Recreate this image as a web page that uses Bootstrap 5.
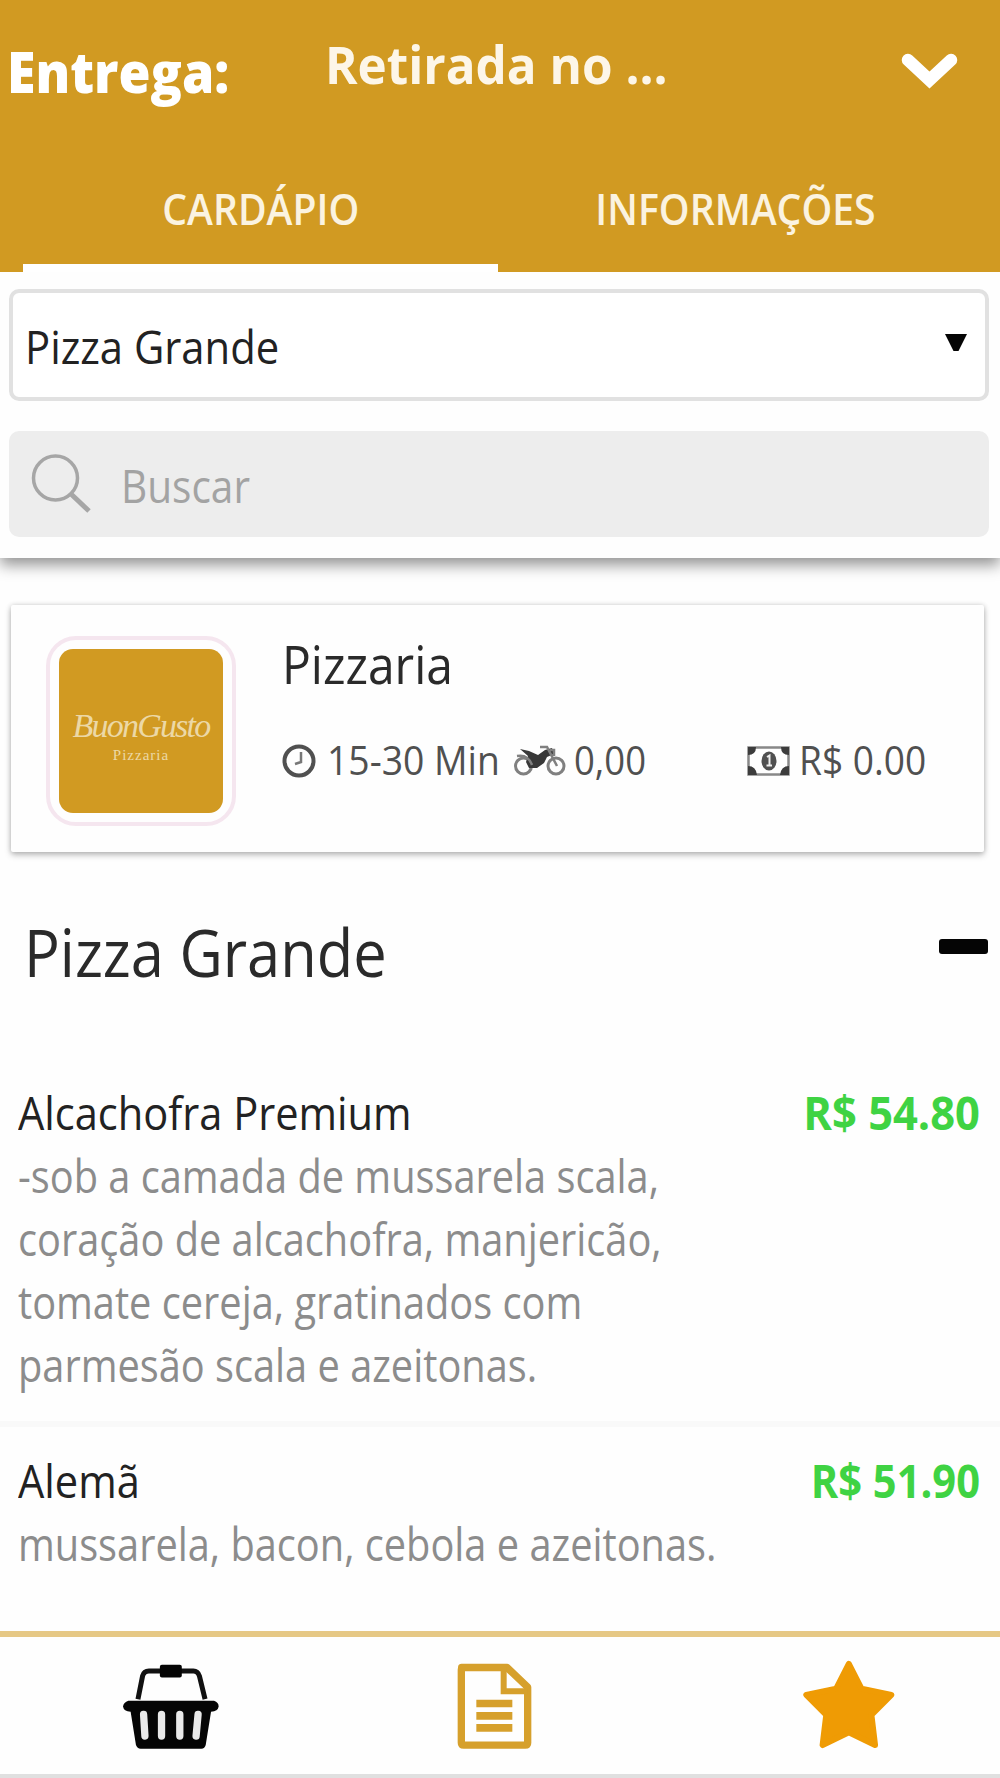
<!DOCTYPE html>
<html lang="pt-BR">
<head>
<meta charset="utf-8">
<meta name="viewport" content="width=device-width, initial-scale=1">
<title>Pizzaria - Cardápio</title>
<link href="https://cdn.jsdelivr.net/npm/bootstrap@5.3.0/dist/css/bootstrap.min.css" rel="stylesheet">
<style>
:root{--gold:#d19a22}
body{font-family:"Open Sans","Noto Sans",sans-serif;background:#fefefe;color:#222;width:1000px;height:1778px;overflow:hidden}
/* slightly condensed text */
.cond{display:inline-block;white-space:nowrap;transform-origin:0 50%;transform:scaleX(var(--sx,.91))}
.cond-end{transform-origin:100% 50%}
.topbar{background:var(--gold);height:272px;color:#fff}
.ship-row{height:144px}
.ship-label{font-size:57px;font-weight:800;line-height:64px;width:325px;padding:39px 0 0 7px;--sx:.91}
.ship-value{font-size:52px;font-weight:700;line-height:64px;padding-top:32px;color:#fdf6e8;--sx:.95}
.chev{width:60px;height:40px;margin:51px 40px 0 auto}
.tab-row{height:128px;padding:0 23px}
.tab-row .nav-link{color:#fbf3e0;font-size:44px;font-weight:600;line-height:60px;padding:34px 0 26px;border:0;border-bottom:8px solid transparent;border-radius:0;width:475px;height:128px;text-align:center;background:none}
.tab-row .nav-link.active{border-bottom-color:#fff}
.tab-row .cond{transform-origin:50% 50%;--sx:.89}
.filters{background:#fefefe;height:286px;padding:17px 11px 0 9px;box-shadow:0 7px 14px rgba(0,0,0,.42);clip-path:inset(0 0 -40px 0)}
.cat-select{height:112px;border:4px solid #e1e1e1;border-radius:10px;padding:0 17px 0 12px;font-size:46px;line-height:104px;background:#fff;--sx:.908;color:#222}
.cat-select .cond{padding-top:2px}
.search-box{height:106px;margin-top:30px;border-radius:10px;background:#ededed;color:#a3a3a3;font-size:46px;padding-left:22px;--sx:.882}
.search-box svg{width:60px;height:60px;margin-right:30px}
.search-box .cond{padding-top:2px}
.shop{margin:47px 16px 0 11px;height:247px;border-radius:2px;background:#fefefe;box-shadow:0 3px 6px rgba(0,0,0,.25),0 0 5px rgba(0,0,0,.15);padding:31px 0 0 35px}
.logo-frame{width:190px;height:190px;border:4px solid #f5e6ef;border-radius:30px;padding:9px}
.logo-tile{height:164px;border-radius:14px;background:var(--gold);color:#ecd8a6;font-family:"Liberation Serif",serif;line-height:1;padding-top:57px}
.logo-name{font-size:34px;font-style:italic;letter-spacing:-1.8px;line-height:40px}
.logo-sub{font-size:15px;letter-spacing:1px;line-height:18px}
.shop-name{font-size:53px;line-height:60px;margin-left:46px;margin-top:-2px;--sx:.905;color:#2a2a2a}
.meta-row{margin-left:46px;margin-top:35px;font-size:41px;line-height:60px;color:#505050}
.t-time{margin-left:11px;width:171px}
.t-moto{margin-left:16px}
.t-fee{margin-left:8px;width:76px;--sx:.89}
.t-note{margin-left:97px}
.t-min{margin-left:8px;--sx:.905}
.sect-head{height:196px;padding:68px 12px 0 24px;font-size:65px;line-height:64px;--sx:.917;color:#2a2a2a}
.minus{width:49px;height:15px;border-radius:3px;background:#050505;margin-top:19px}
.dish{padding:0 20px 0 18px;font-size:46px;line-height:63px}
.dish h3{font-size:46px;line-height:63px;margin:0;font-weight:400;color:#222;--sx:.904}
.dish p{margin:0;color:#8c8c8c;--sx:.864}
.price{font-weight:700;color:#3fd343;--sx:.945}
.price-b{--sx:.905}
.dish-a{height:346px;border-bottom:6px solid #f9f9f9;margin-top:33px}
.dish-b{padding-top:22px;height:204px}
.bottom-nav{height:147px;border-top:6px solid #e6c885;border-bottom:4px solid #e0e0e0}
.n-basket{margin:26px 0 0 122px}
.n-doc{margin:26px 0 0 238px}
.n-star{margin:23px 0 0 270px}
</style>
<script src="https://cdn.jsdelivr.net/npm/bootstrap@5.3.0/dist/js/bootstrap.bundle.min.js"></script>
</head>
<body>
<header class="topbar">
  <div class="ship-row d-flex align-items-start">
    <div class="ship-label"><span class="cond">Entrega:</span></div>
    <div class="ship-value"><span class="cond">Retirada no ...</span></div>
    <svg class="chev" viewBox="0 0 60 40"><path d="M8 10L29.500 30L51 10" fill="none" stroke="#fff" stroke-width="12.500" stroke-linecap="round" transform="translate(0 -1)"/></svg>
  </div>
  <nav class="nav tab-row flex-nowrap">
    <a class="nav-link active"><span class="cond">CARDÁPIO</span></a>
    <a class="nav-link"><span class="cond">INFORMAÇÕES</span></a>
  </nav>
</header>

<section class="filters position-relative">
  <div class="cat-select d-flex justify-content-between align-items-center">
    <span class="cond">Pizza Grande</span>
    <svg width="24" height="20" viewBox="0 0 24 20" class="mb-1"><path d="M1 1H23L14.500 18H9.500Z" fill="#050505"/></svg>
  </div>
  <div class="search-box d-flex align-items-center">
    <svg viewBox="0 0 60 60" fill="none" stroke="#a6a6a6"><circle cx="33.500" cy="24" r="22" stroke-width="3.500" transform="translate(-9 0)"/><path d="M40 40L58 57" stroke-width="5"/></svg>
    <span class="cond">Buscar</span>
  </div>
</section>

<section class="shop d-flex align-items-start">
  <div class="logo-frame flex-shrink-0">
    <div class="logo-tile text-center">
      <div class="logo-name">BuonGusto</div>
      <div class="logo-sub">Pizzaria</div>
    </div>
  </div>
  <div>
    <div class="shop-name"><span class="cond">Pizzaria</span></div>
    <div class="meta-row d-flex align-items-center">
      <svg width="34" height="34" viewBox="0 0 34 34" fill="none" stroke="#505050" class="flex-shrink-0 mt-1"><circle cx="17" cy="17" r="14.500" stroke-width="4"/><path d="M19 8V18L13 20" stroke-width="2.500" stroke="#777"/></svg>
      <span class="cond t-time">15-30 Min</span>
      <svg class="t-moto flex-shrink-0 mt-1" width="52" height="32" viewBox="0 0 52 32" fill="none" stroke="#808080" stroke-width="3"><circle cx="9.500" cy="21" r="8"/><circle cx="42" cy="21" r="8"/><path d="M6 4L15 6L24 10L31 5L38 3L40 9L33 12L30 18L23 23L15 23L12 17L14 11Z" fill="#383838" stroke="none"/><path d="M26 2H33L43 21M36 5H40V11M3 11Q14 9 18 20" stroke-width="2.500"/></svg>
      <span class="cond t-fee">0,00</span>
      <svg class="t-note flex-shrink-0 mt-1" width="44" height="30" viewBox="0 0 44 30"><rect x="1.500" y="1.500" width="40" height="27" fill="none" stroke="#888" stroke-width="2.500"/><path d="M1 1H9Q9 9 1 9ZM42 1H34Q34 9 42 9ZM1 29H10Q9 20 1 20ZM42 29H33Q34 20 42 20Z" fill="#3c3c3c"/><ellipse cx="22" cy="15" rx="7.500" ry="9.500" fill="#505050"/><path d="M20 11L22.500 9.500V19M19.500 19.500H25" stroke="#eee" stroke-width="2" fill="none"/></svg>
      <span class="cond t-min">R$ 0.00</span>
    </div>
  </div>
</section>

<div class="sect-head d-flex justify-content-between align-items-start">
  <span class="cond">Pizza Grande</span>
  <span class="minus"></span>
</div>

<article class="dish dish-a">
  <div class="d-flex justify-content-between">
    <h3><span class="cond">Alcachofra Premium</span></h3>
    <span class="price cond cond-end">R$ 54.80</span>
  </div>
  <p><span class="cond">-sob a camada de mussarela scala,<br>coração de alcachofra, manjericão,<br>tomate cereja, gratinados com<br>parmesão scala e azeitonas.</span></p>
</article>
<article class="dish dish-b">
  <div class="d-flex justify-content-between">
    <h3><span class="cond">Alemã</span></h3>
    <span class="price price-b cond cond-end">R$ 51.90</span>
  </div>
  <p><span class="cond">mussarela, bacon, cebola e azeitonas.</span></p>
</article>

<nav class="bottom-nav d-flex align-items-start">
  <svg class="n-basket" width="97" height="87" viewBox="365 190 292 260"><path d="M413 298L427 228Q431 213 446 213H580Q593 213 598 228L615 298" fill="none" stroke="#111" stroke-width="15"/><rect x="479" y="194" width="66" height="39" rx="6" fill="#050505"/><path d="M384 303H642Q656 308 656 320Q654 334 633 336L617 436Q614 447 604 447H421Q411 447 407 436L391 336Q370 334 368 320Q370 308 384 303Z" fill="#050505"/><path d="M430 344L434 409M484 344V409M539 344V409M594 344L588 409" stroke="#e9e9e9" stroke-width="22" stroke-linecap="round"/></svg>
  <svg class="n-doc" width="75" height="87" viewBox="1370 190 225 260" fill="none" stroke="#d6a02c"><path d="M1384 203H1520L1582 262V429Q1582 436 1575 436H1390Q1383 436 1383 429V210Q1383 203 1390 203Z" stroke-width="22" stroke-linejoin="round"/><path d="M1510 203V274H1582" stroke-width="18"/><path d="M1428 311H1536M1428 348H1536M1428 384H1536" stroke-width="23"/></svg>
  <svg class="n-star" width="93" height="89" viewBox="905 182 278 268"><path d="M1045 194L1083 268L1173 287L1113 347L1124 438L1045 400L966 438L977 347L917 287L1007 268Z" fill="#ef9b04" stroke="#ef9b04" stroke-width="18" stroke-linejoin="round"/></svg>
</nav>
</body>
</html>
